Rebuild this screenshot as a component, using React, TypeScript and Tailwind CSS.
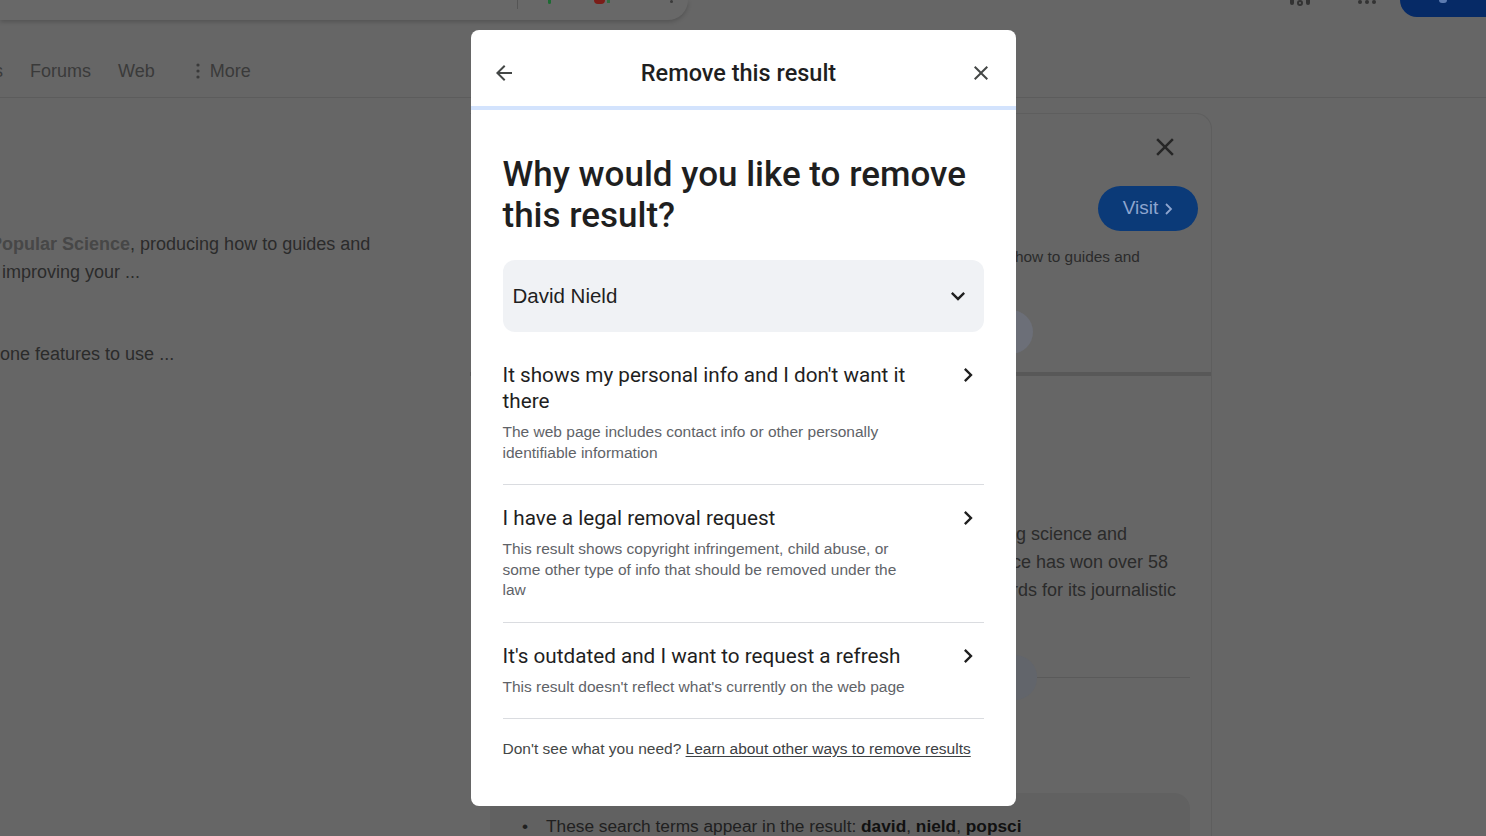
const ArrowBack = () => (
  <svg width="24" height="24" viewBox="0 0 24 24" fill="#444746">
    <path d="M20 11H7.83l5.59-5.59L12 4l-8 8 8 8 1.41-1.41L7.83 13H20v-2z" />
  </svg>
);

const CloseIcon = ({ size = 24, color = "#444746" }: { size?: number; color?: string }) => (
  <svg width={size} height={size} viewBox="0 0 24 24" fill={color}>
    <path d="M19 6.41L17.59 5 12 10.59 6.41 5 5 6.41 10.59 12 5 17.59 6.41 19 12 13.41 17.59 19 19 17.59 13.41 12z" />
  </svg>
);

const ChevronRight = () => (
  <svg width="28" height="28" viewBox="0 0 24 24" fill="#1f1f1f">
    <path d="M10 6L8.59 7.41 13.17 12l-4.58 4.59L10 18l6-6z" />
  </svg>
);

const ExpandMore = () => (
  <svg width="28" height="28" viewBox="0 0 24 24" fill="#1f1f1f">
    <path d="M16.59 8.59L12 13.17 7.41 8.59 6 10l6 6 6-6z" />
  </svg>
);

const reasons = [
  {
    title: "It shows my personal info and I don't want it there",
    desc: "The web page includes contact info or other personally identifiable information",
  },
  {
    title: "I have a legal removal request",
    desc: "This result shows copyright infringement, child abuse, or some other type of info that should be removed under the law",
  },
  {
    title: "It's outdated and I want to request a refresh",
    desc: "This result doesn't reflect what's currently on the web page",
  },
];

function RemoveDialog() {
  return (
    <div className="w-[545px] overflow-hidden rounded-[8px] bg-white">
      {/* header */}
      <div className="flex items-center justify-between pl-[21px] pr-[22px] pt-[25px] pb-[15px]">
        <ArrowBack />
        <h1 className="mr-[8px] font-['Roboto',sans-serif] text-[23.5px] font-medium leading-[36px] text-[#1f1f1f]">
          Remove this result
        </h1>
        <CloseIcon />
      </div>
      <div className="h-[4px] bg-[#d3e3fd]" />

      <div className="px-[32px] pt-[44px]">
        <h2 className="font-['Roboto',sans-serif] text-[35px] font-medium leading-[41px] text-[#1f1f1f]">
          Why would you like to remove this result?
        </h2>

        <div className="mt-[24px] flex h-[72px] items-center justify-between rounded-[12px] bg-[#f0f2f5] pl-[10px] pr-[12px]">
          <span className="text-[20.5px] text-[#1f1f1f]">David Nield</span>
          <ExpandMore />
        </div>

        <div className="mt-[10px]">
          {reasons.map((r) => (
            <div key={r.title} className="border-b border-[#dadce0]">
              <div className="flex justify-between pt-[20px] pb-[21px]">
                <div className="w-[411px]">
                  <div className="font-['Roboto',sans-serif] text-[20.7px] leading-[26px] text-[#1f1f1f]">
                    {r.title}
                  </div>
                  <p className="mt-[8px] text-[15.5px] leading-[20.5px] text-[#5f6368]">{r.desc}</p>
                </div>
                <div className="-mt-[1px] pr-[2px]">
                  <ChevronRight />
                </div>
              </div>
            </div>
          ))}
        </div>

        <p className="pt-[20px] pb-[47px] text-[15.5px] leading-[20px] text-[#444746]">
          Don't see what you need?{" "}
          <a className="text-[#3c4043] underline underline-offset-2">Learn about other ways to remove results</a>
        </p>
      </div>
    </div>
  );
}

export default function App() {
  return (
    <div className="relative h-screen w-full overflow-hidden bg-[#666666] font-['Liberation_Sans',Arial,sans-serif]">
      {/* search header, dimmed */}
      <header className="h-[98px] border-b border-[#5c5c5c]">
        <div className="flex h-[20px] items-start justify-between">
          <div className="flex h-[20px] w-[688px] items-start rounded-br-[26px] bg-[#686868] pl-[517px] shadow-[0_2px_4px_rgba(0,0,0,0.18)]">
            <div className="h-[9px] w-px bg-[#555555]" />
            <div className="ml-[30px] h-[4px] w-[3px] rounded-b-sm bg-[#1d6b33]" />
            <div className="ml-[43px] h-[4px] w-[11px] rounded-b-sm bg-[#7b1d18]" />
            <div className="ml-[2px] h-[3px] w-[3px] bg-[#2e6b3e]" />
            <div className="ml-[60px] h-[3px] w-[3px] rounded-full bg-[#3a3a3a]" />
          </div>
          <div className="flex items-start">
            <div className="mr-[48px] flex gap-[3px]">
              <div className="h-[5px] w-[4px] rounded-b-full bg-[#333333]" />
              <div className="h-[6px] w-[6px] rounded-full border-2 border-[#333333]" />
              <div className="h-[5px] w-[4px] rounded-b-full bg-[#333333]" />
            </div>
            <div className="mr-[24px] flex gap-[3px]">
              <div className="h-[4px] w-[4px] rounded-full bg-[#333333]" />
              <div className="h-[4px] w-[4px] rounded-full bg-[#333333]" />
              <div className="h-[4px] w-[4px] rounded-full bg-[#333333]" />
            </div>
            <div className="flex h-[17px] w-[86px] items-start justify-center rounded-bl-[18px] bg-[#062a66]">
              <div className="h-[3px] w-[8px] rounded-b-full bg-[#5c7bb0]" />
            </div>
          </div>
        </div>
        <nav className="mt-[39px] flex items-center text-[18px] leading-[24px] text-[#3a3a3a]">
          <span className="-ml-[42px]">News</span>
          <span className="ml-[27px]">Forums</span>
          <span className="ml-[27px]">Web</span>
          <span className="ml-[41px] flex items-center gap-[10px]">
            <svg width="4" height="16" viewBox="0 0 4 16" fill="#3a3a3a">
              <circle cx="2" cy="2" r="1.6" />
              <circle cx="2" cy="8" r="1.6" />
              <circle cx="2" cy="14" r="1.6" />
            </svg>
            More
          </span>
        </nav>
      </header>

      <div className="flex h-[738px]">
        {/* results column */}
        <div className="w-[470px] shrink-0 pt-[132px] text-[18px] leading-[28px] text-[#2b2b2b]">
          <div className="-ml-[10px] whitespace-nowrap">
            <b className="text-[#474747]">Popular Science</b>, producing how to guides and
          </div>
          <div className="ml-[2px] whitespace-nowrap">improving your ...</div>
          <div className="mt-[54px] -ml-[20px] whitespace-nowrap">phone features to use ...</div>
        </div>

        {/* about this result panel */}
        <div className="mt-[15px] w-[742px] shrink-0 rounded-tr-[16px] border-t border-r border-[#5e5e5e]">
          <div className="flex h-[258px] flex-col">
            <div className="flex justify-end pt-[18px] pr-[31px]">
              <CloseIcon size={30} color="#262626" />
            </div>
            <div className="mt-[24px] flex justify-end pr-[13px]">
              <div className="flex h-[45px] w-[100px] items-center justify-center gap-[6px] rounded-full bg-[#0b3a78] text-[19px] text-[#8ea5cf]">
                Visit
                <svg width="9" height="14" viewBox="0 0 9 14" fill="none" stroke="#8ea5cf" strokeWidth="1.8">
                  <path d="M2 2l5 5-5 5" />
                </svg>
              </div>
            </div>
            <div className="ml-[545px] mt-[15px] whitespace-nowrap text-[15.4px] leading-[22px] text-[#2b2b2b]">
              how to guides and
            </div>
            <div className="ml-[519px] mt-[42px] h-[44px] w-[44px] rounded-full bg-[#6c6f78]" />
          </div>
          <div className="h-[4px] bg-[#585858]" />

          <div className="ml-[532px] mt-[144px] whitespace-nowrap text-[18px] leading-[28px] text-[#2b2b2b]">
            <div>ing science and</div>
            <div>nce has won over 58</div>
            <div>ards for its journalistic</div>
          </div>
          <div className="ml-[523px] mr-[21px] mt-[51px] flex items-center">
            <div className="h-[45px] w-[44px] shrink-0 rounded-full bg-[#62656b]" />
            <div className="h-px flex-1 bg-[#5a5a5a]" />
          </div>

          <div className="ml-[20px] mr-[21px] mt-[93px] flex h-[80px] rounded-[16px] bg-[#616161] pl-[32px] pt-[22px] text-[17.3px] leading-[22px] text-[#202020]">
            <span className="w-[24px]">•</span>
            <span className="whitespace-nowrap">
              These search terms appear in the result: <b className="text-[#111111]">david</b>,{" "}
              <b className="text-[#111111]">nield</b>, <b className="text-[#111111]">popsci</b>
            </span>
          </div>
        </div>
      </div>

      {/* dialog sits above the dimmed page */}
      <div className="absolute inset-0 flex items-center justify-center">
        <RemoveDialog />
      </div>
    </div>
  );
}
